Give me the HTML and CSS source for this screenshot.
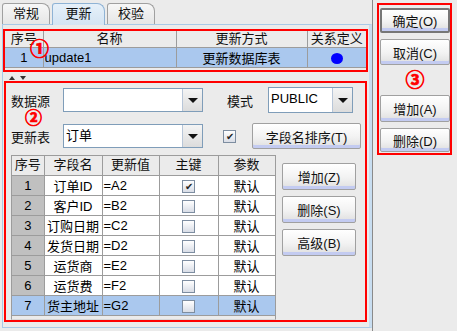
FILE: index.html
```html
<!DOCTYPE html>
<html lang="zh">
<head>
    <meta charset="UTF-8">
    <title>更新设置</title>
    <link rel="stylesheet" href="styles.css">
</head>
<body>
<div class="window">

    <!-- Left: tabbed settings -->
    <div class="main">
        <div class="tabs">
            <div class="tab">常规</div>
            <div class="tab tab-active">更新</div>
            <div class="tab">校验</div>
        </div>

        <div class="tab-panel">
            <!-- Update list -->
            <div class="mark-box box-list">
                <table class="grid grid-top">
                    <colgroup>
                        <col style="width:38px">
                        <col style="width:133px">
                        <col style="width:131px">
                        <col style="width:59px">
                    </colgroup>
                    <tr class="head">
                        <td>序号</td><td>名称</td><td>更新方式</td><td>关系定义</td>
                    </tr>
                    <tr class="selected">
                        <td class="c">1</td>
                        <td class="l">update1</td>
                        <td class="c">更新数据库表</td>
                        <td class="c"><span class="dot"></span></td>
                    </tr>
                </table>
                <span class="mark mark-1">①</span>
            </div>

            <div class="splitter">
                <svg width="6" height="4" viewBox="0 0 6 4"><path d="M0 4 L3 0 L6 4 Z" fill="#333"/></svg>
                <svg width="6" height="4" viewBox="0 0 6 4"><path d="M0 0 L6 0 L3 4 Z" fill="#333"/></svg>
            </div>

            <!-- Update detail -->
            <div class="mark-box box-detail">
                <div class="form-row">
                    <span class="label">数据源</span>
                    <div class="combo combo-source">
                        <span class="combo-text"></span>
                        <span class="combo-btn"><i class="arrow"></i></span>
                    </div>
                    <span class="label label-mode">模式</span>
                    <div class="combo combo-mode">
                        <span class="combo-text">PUBLIC</span>
                        <span class="combo-btn"><i class="arrow"></i></span>
                    </div>
                </div>

                <div class="form-row row-table">
                    <span class="label">更新表</span>
                    <div class="combo combo-source">
                        <span class="combo-text">订单</span>
                        <span class="combo-btn"><i class="arrow"></i></span>
                    </div>
                    <span class="check check-on check-sort">&#10004;</span>
                    <div class="btn btn-sort">字段名排序(T)</div>
                </div>

                <div class="lower">
                    <div class="field-area">
                        <table class="grid grid-fields">
                            <colgroup>
                                <col style="width:32px">
                                <col style="width:58px">
                                <col style="width:57px">
                                <col style="width:59px">
                                <col style="width:57px">
                            </colgroup>
                            <tr class="head">
                                <td>序号</td><td>字段名</td><td>更新值</td><td>主键</td><td>参数</td>
                            </tr>
                            <tr><td class="num">1</td><td class="c">订单ID</td><td class="l">=A2</td><td class="c"><span class="check check-on">&#10004;</span></td><td class="c">默认</td></tr>
                            <tr><td class="num">2</td><td class="c">客户ID</td><td class="l">=B2</td><td class="c"><span class="check"></span></td><td class="c">默认</td></tr>
                            <tr><td class="num">3</td><td class="c">订购日期</td><td class="l">=C2</td><td class="c"><span class="check"></span></td><td class="c">默认</td></tr>
                            <tr><td class="num">4</td><td class="c">发货日期</td><td class="l">=D2</td><td class="c"><span class="check"></span></td><td class="c">默认</td></tr>
                            <tr><td class="num">5</td><td class="c">运货商</td><td class="l">=E2</td><td class="c"><span class="check"></span></td><td class="c">默认</td></tr>
                            <tr><td class="num">6</td><td class="c">运货费</td><td class="l">=F2</td><td class="c"><span class="check"></span></td><td class="c">默认</td></tr>
                            <tr class="selected"><td class="num">7</td><td class="c">货主地址</td><td class="l">=G2</td><td class="c"><span class="check"></span></td><td class="c">默认</td></tr>
                        </table>
                    </div>

                    <div class="field-btns">
                        <div class="btn">增加(Z)</div>
                        <div class="btn">删除(S)</div>
                        <div class="btn">高级(B)</div>
                    </div>
                </div>

                <span class="mark mark-2">②</span>
            </div>
        </div>
    </div>

    <!-- Right: dialog actions -->
    <div class="side">
        <div class="mark-box box-actions">
            <div class="btn btn-default">确定(O)</div>
            <div class="btn btn-cancel">取消(C)</div>
            <div class="mark-3">③</div>
            <div class="btn btn-add">增加(A)</div>
            <div class="btn btn-del">删除(D)</div>
        </div>
    </div>

</div>
</body>
</html>
```

FILE: styles.css
```css
/* Basic Styles */
* {
    box-sizing: border-box;
}

body {
    margin: 0;
    font-family: "Liberation Sans", "Noto Sans CJK SC", sans-serif;
    font-size: 13px;
    color: #000;
    background-color: #ebebeb;
}

.window {
    display: flex;
    width: 457px;
    height: 331px;
    overflow: hidden;
}

/* Left part */
.main {
    width: 373px;
    padding: 3px 0 0 2px;
    border-right: 1px solid #8a8a8a;
}

/* Tabs */
.tabs {
    display: flex;
    gap: 2px;
    height: 21px;
}

.tab {
    width: 48px;
    height: 21px;
    border: 1px solid #a0a0a0;
    border-bottom: none;
    border-radius: 3px 8px 0 0;
    background: linear-gradient(#f7f7f7, #e6e6e6);
    text-align: center;
    line-height: 20px;
    color: #111;
}

.tab-active {
    width: 53px;
    height: 22px;
    margin-bottom: -1px;
    position: relative;
    background: linear-gradient(#e6f0f9, #d4e4f3);
    border-color: #8fb3d5;
}

.tab-panel {
    height: 304px;
    padding: 4px 1px 0 0;
    border: 1px solid #a9c9e6;
    border-right: 3px solid #c8ddf0;
}

/* Red annotation boxes */
.mark-box {
    border: 2px solid #ff0000;
    position: relative;
}

.mark,
.mark-3 {
    color: #ff0000;
    font-family: "Noto Sans CJK SC", sans-serif;
    font-weight: bold;
    -webkit-text-stroke: 0.7px #ff0000;
}

.mark {
    position: absolute;
    line-height: 1;
}

.mark-1 {
    left: 25px;
    top: 7px;
    font-size: 19px;
}

.mark-2 {
    left: 19px;
    top: 25px;
    font-size: 17px;
}

.box-list {
    height: 43px;
}

.splitter {
    height: 9px;
    display: flex;
    gap: 5px;
    padding: 4px 0 0 6px;
}

.splitter svg {
    display: block;
}

.box-detail {
    height: 241px;
    margin: 0 1px 0 1px;
    padding: 4px 0 0 5px;
}

/* Tables */
.grid {
    border-collapse: collapse;
    table-layout: fixed;
}

.grid td {
    border-right: 1px solid #9c9c9c;
    border-bottom: 1px solid #9c9c9c;
    padding: 0;
    white-space: nowrap;
    overflow: hidden;
}

.grid .head td {
    background-color: #ebebeb;
    text-align: center;
    color: #111;
}

.grid .c {
    text-align: center;
}

.grid .l {
    text-align: left;
    padding-left: 1px;
}

.grid-top {
    width: 361px;
    background-color: #fff;
}

.grid-top .head td {
    height: 16px;
    line-height: 15px;
}

.grid-top tr td:last-child {
    border-right: none;
}

.grid-top .selected td {
    height: 19px;
    background-color: #aac8ee;
}

.dot {
    display: inline-block;
    width: 12px;
    height: 11px;
    border-radius: 50%;
    background-color: #0000ff;
    vertical-align: middle;
}

/* Form rows */
.form-row {
    display: flex;
    align-items: center;
    height: 26px;
}

.row-table {
    margin-top: 10px;
}

.label {
    width: 52px;
    color: #111;
}

.label-mode {
    margin-left: 24px;
    width: 41px;
}

.combo {
    display: flex;
    height: 24px;
    border: 1px solid #7f9db9;
    background-color: #fff;
}

.combo-source {
    width: 140px;
}

.combo-mode {
    width: 85px;
    height: 26px;
}

.combo-text {
    flex: 1;
    padding-left: 2px;
    line-height: 22px;
}

.combo-btn {
    width: 20px;
    display: flex;
    align-items: center;
    justify-content: center;
    border-left: 1px solid #b8c6d8;
    background: linear-gradient(#f4f4f4, #dcdcdc);
}

.arrow {
    width: 0;
    height: 0;
    border-left: 5px solid transparent;
    border-right: 5px solid transparent;
    border-top: 5px solid #111;
}

.check {
    display: inline-block;
    width: 13px;
    height: 13px;
    border: 1px solid #7d8da0;
    background: linear-gradient(#ffffff, #d9dde6);
    font-size: 10px;
    line-height: 11px;
    text-align: center;
    vertical-align: middle;
    color: #222;
}

.check-sort {
    margin-left: 20px;
}

/* Buttons */
.btn {
    height: 27px;
    border: 1px solid #a0a0a0;
    border-radius: 2px;
    background: linear-gradient(#ffffff, #f2f2f2 55%, #dedede);
    box-shadow: inset 0 -3px 0 #c3cbf1;
    display: flex;
    align-items: center;
    justify-content: center;
    color: #111;
    white-space: nowrap;
}

.btn-sort {
    width: 109px;
    height: 26px;
    margin-left: 16px;
}

/* Field table */
.lower {
    display: flex;
    gap: 6px;
    margin-top: 6px;
}

.field-area {
    width: 265px;
    height: 165px;
    border: 1px solid #9c9c9c;
    border-bottom-color: #d6d6d6;
    background-color: #ebebeb;
}

.grid-fields {
    width: 263px;
    background-color: #fff;
}

.grid-fields .head td {
    height: 19px;
    line-height: 18px;
}

.grid-fields td {
    height: 20px;
}

.grid-fields .num {
    background-color: #c0c0c0;
    text-align: center;
}

.grid-fields .selected td {
    background-color: #aac8ee;
}

.field-btns {
    width: 74px;
    margin-top: 8px;
    display: flex;
    flex-direction: column;
    gap: 6px;
}

/* Right action column */
.side {
    padding: 3px 0 0 4px;
}

.box-actions {
    width: 75px;
    height: 152px;
    padding: 3px 0 0 1px;
    display: flex;
    flex-direction: column;
}

.box-actions .btn {
    width: 70px;
}

.btn-default {
    height: 25px;
    border: 2px solid #767676;
}

.btn-cancel {
    margin-top: 6px;
    height: 26px;
}

.mark-3 {
    height: 30px;
    text-align: center;
    font-size: 19px;
    line-height: 28px;
}

.btn-add {
    height: 27px;
}

.btn-del {
    margin-top: 6px;
    height: 24px;
}
```
